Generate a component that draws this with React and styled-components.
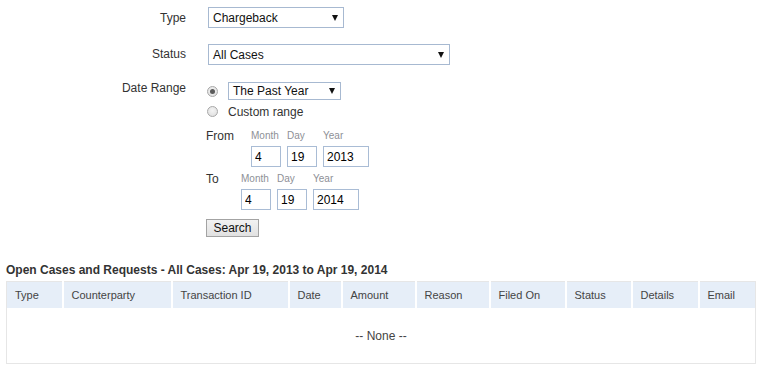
import styled, { createGlobalStyle } from "styled-components"

const GlobalStyle = createGlobalStyle`
  body {
    margin: 0;
    background: #fff;
    font-family: "Liberation Sans", Arial, sans-serif;
    font-size: 12px;
    color: #333;
  }
`

const columns = [
  { name: "Type", width: 56 },
  { name: "Counterparty", width: 109 },
  { name: "Transaction ID", width: 117 },
  { name: "Date", width: 53 },
  { name: "Amount", width: 74 },
  { name: "Reason", width: 74 },
  { name: "Filed On", width: 76 },
  { name: "Status", width: 66 },
  { name: "Details", width: 67 },
  { name: "Email", width: 57 },
]

function DateRow ({ label, labelWidth, month, day, year }) {
  return (
    <DateLine $first={label === "From"}>
      <DateLabel $w={labelWidth}>{label}</DateLabel>
      <Fields>
        <Field>
          <Hint>Month</Hint>
          <TextInput $w={30} value={month} readOnly />
        </Field>
        <Field>
          <Hint>Day</Hint>
          <TextInput $w={30} value={day} readOnly />
        </Field>
        <Field>
          <Hint>Year</Hint>
          <TextInput $w={46} value={year} readOnly />
        </Field>
      </Fields>
    </DateLine>
  )
}

export default function App () {
  return (
    <>
      <GlobalStyle />
      <Page>
        <Form>
          <Label $pt={4}>Type</Label>
          <Select $w={136}>Chargeback<Arrow /></Select>

          <Label $pt={3}>Status</Label>
          <Select $w={242}>All Cases<Arrow /></Select>

          <Label $pt={0}>Date Range</Label>
          <DateBlock>
            <RadioRow $h={18}>
              <Radio $checked />
              <Select $w={113} $h={18}>The Past Year<Arrow /></Select>
            </RadioRow>
            <RadioRow $h={15} $mt={4}>
              <Radio />
              <span>Custom range</span>
            </RadioRow>
            <DateRow label="From" labelWidth={45} month="4" day="19" year="2013" />
            <DateRow label="To" labelWidth={35} month="4" day="19" year="2014" />
            <SearchButton>Search</SearchButton>
          </DateBlock>
        </Form>

        <Heading>Open Cases and Requests - All Cases: Apr 19, 2013 to Apr 19, 2014</Heading>
        <Table>
          <colgroup>
            {columns.map(c => <col key={c.name} style={{ width: c.width }} />)}
          </colgroup>
          <thead>
            <tr>
              {columns.map(c => <Th key={c.name}>{c.name}</Th>)}
            </tr>
          </thead>
          <tbody>
            <tr>
              <Empty colSpan={columns.length}>-- None --</Empty>
            </tr>
          </tbody>
        </Table>
      </Page>
    </>
  )
}

const Page = styled.div`
  padding: 7px 5px 0 6px;
`

const Form = styled.div`
  display: grid;
  grid-template-columns: 180px auto;
  column-gap: 22px;
  row-gap: 16px;
  align-items: start;
  justify-items: start;
`

const Label = styled.div`
  justify-self: end;
  padding-top: ${p => p.$pt}px;
  line-height: 14px;
  color: #333;
`

const Select = styled.div`
  position: relative;
  box-sizing: border-box;
  width: ${p => p.$w}px;
  height: ${p => p.$h || 21}px;
  display: flex;
  align-items: center;
  padding-left: 4px;
  border: 1px solid #a7b9d1;
  background: #fff;
  color: #111;
  font-size: 12px;
`

const Arrow = styled.span`
  position: absolute;
  right: 5px;
  top: 50%;
  margin-top: -3px;
  width: 0;
  height: 0;
  border-left: 3px solid transparent;
  border-right: 3px solid transparent;
  border-top: 6px solid #111;
`

const DateBlock = styled.div`
  display: flex;
  flex-direction: column;
  align-items: flex-start;
  margin-top: 1px;
  margin-left: -2px;
`

const RadioRow = styled.div`
  display: flex;
  align-items: center;
  gap: 10px;
  height: ${p => p.$h}px;
  margin-top: ${p => p.$mt || 0}px;
  padding-left: 1px;
  color: #333;
`

const Radio = styled.span`
  position: relative;
  box-sizing: border-box;
  width: 11px;
  height: 11px;
  border-radius: 50%;
  border: 1px solid #a8a8a8;
  background: radial-gradient(circle at 50% 40%, #f4f4f4 0%, #dcdcdc 100%);

  &::after {
    content: "";
    display: ${p => p.$checked ? "block" : "none"};
    position: absolute;
    left: 2px;
    top: 2px;
    width: 5px;
    height: 5px;
    border-radius: 50%;
    background: #5a5a5a;
  }
`

const DateLine = styled.div`
  display: flex;
  margin-top: ${p => p.$first ? 10 : 5}px;
`

const DateLabel = styled.div`
  width: ${p => p.$w}px;
  line-height: 14px;
  color: #333;
`

const Fields = styled.div`
  display: flex;
  gap: 6px;
`

const Field = styled.div`
  display: flex;
  flex-direction: column;
  gap: 3px;
`

const Hint = styled.span`
  font-size: 10px;
  line-height: 14px;
  color: #8e9096;
`

const TextInput = styled.input`
  box-sizing: border-box;
  width: ${p => p.$w}px;
  height: 21px;
  margin: 0;
  padding: 0 0 0 3px;
  border: 1px solid #a9bcd5;
  font-family: "Liberation Sans", Arial, sans-serif;
  font-size: 12px;
  color: #000;
  outline: none;
`

const SearchButton = styled.button`
  box-sizing: border-box;
  margin-top: 9px;
  width: 53px;
  height: 18px;
  padding: 0;
  border: 1px solid #a3a3a3;
  border-radius: 0;
  background: linear-gradient(#f2f2f2, #e1e1e1);
  font-family: "Liberation Sans", Arial, sans-serif;
  font-size: 12px;
  color: #111;
`

const Heading = styled.div`
  margin-top: 26px;
  margin-bottom: 4px;
  font-weight: bold;
  line-height: 14px;
  color: #333;
`

const Table = styled.table`
  width: 749px;
  table-layout: fixed;
  border-collapse: collapse;
  border: 1px solid #e6e6e6;
`

const Th = styled.th`
  height: 26px;
  padding: 0 0 0 8px;
  text-align: left;
  font-weight: normal;
  font-size: 11px;
  color: #444;
  background: #e6eef8;
  border-left: 2px solid #fff;

  &:first-child {
    border-left: 0;
  }
`

const Empty = styled.td`
  height: 55px;
  padding: 0;
  text-align: center;
  color: #444;
`
